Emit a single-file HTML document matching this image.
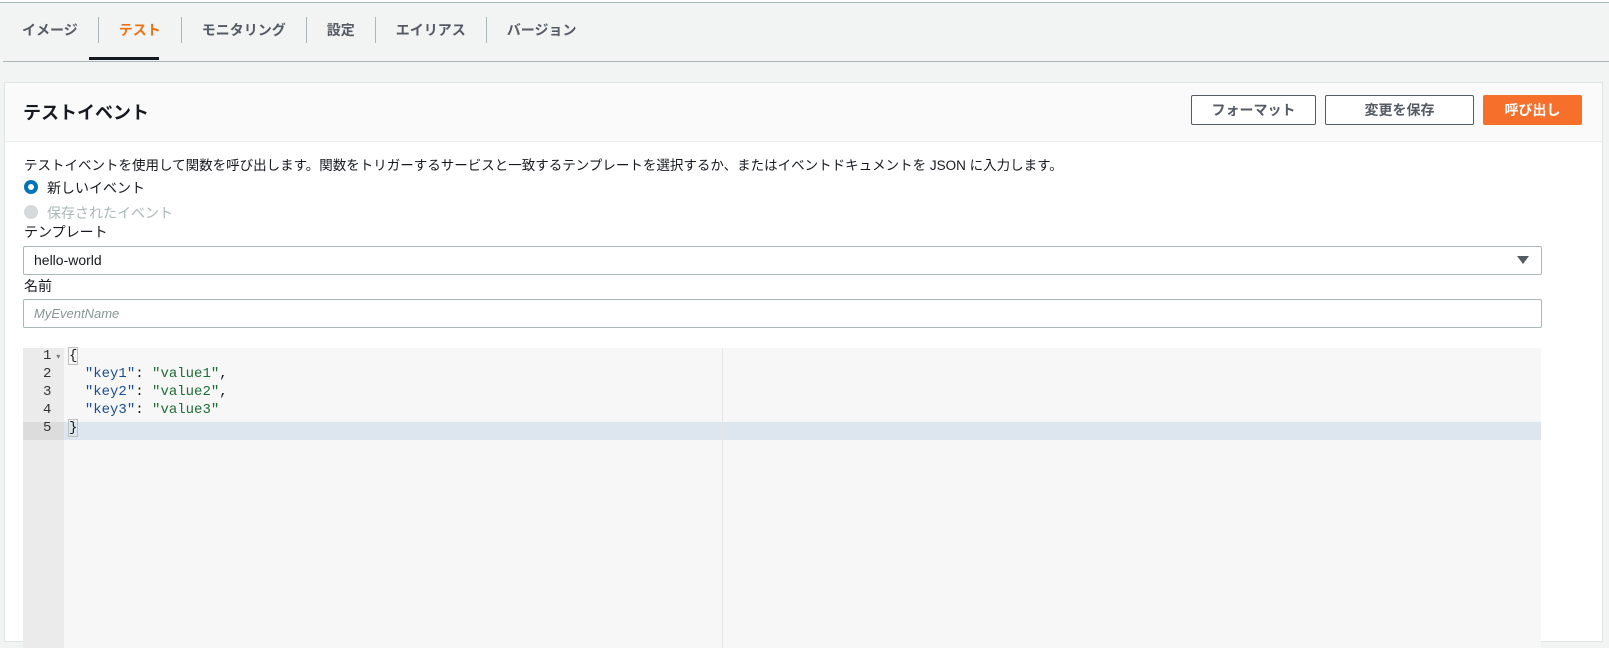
<!DOCTYPE html>
<html><head><meta charset="utf-8"><style>
*{box-sizing:border-box;margin:0;padding:0}
body{width:1609px;height:636px;overflow:hidden;background:#f2f3f3;font-family:"Liberation Sans","Noto Sans CJK JP",sans-serif;color:#16191f;position:relative}
.topline{position:absolute;left:0;top:0;width:1609px;height:3px;border-bottom:1px solid #aab7b8;background:#fff}
.tabs{position:absolute;left:8px;top:17px;height:44px;display:flex}
.tab{font-size:14px;font-weight:bold;color:#545b64;padding:0 20px;height:26px;line-height:26px;margin-top:0;border-left:1px solid #aab7b8;position:relative}
.tab:first-child{border-left:none;padding-left:14px}
.tab.active{color:#ec7211}
.tabline{position:absolute;left:3px;top:61px;width:1606px;height:1px;background:#aab7b8}
.ul{position:absolute;left:89px;top:57px;width:70px;height:3px;background:#16191f}
.panel{position:absolute;left:4px;top:82px;width:1599px;height:560px;background:#fff;border:1px solid #e1e4e4}
.hdr{height:59px;background:#fafafa;border-bottom:1px solid #eaeded;position:relative}
.hdr h2{position:absolute;left:18px;top:16px;font-size:18px;font-weight:bold}
.btn{position:absolute;top:12px;height:30px;border:1px solid #545b64;border-radius:2px;background:#fff;font-size:14px;font-weight:bold;color:#545b64;text-align:center;line-height:28px}
.txt{position:absolute;font-size:14px}
.radio{position:absolute;width:14px;height:14px;border-radius:50%}
.input{position:absolute;left:23px;width:1519px;height:29px;border:1px solid #aab7b8;border-radius:2px;font-size:14px;line-height:27px;padding-left:10px}
.ed{position:absolute;left:23px;top:348px;width:1518px;height:300px;background:#f7f7f7;font-family:"Liberation Mono",monospace;font-size:14px}
.gut{position:absolute;left:0;top:0;width:41px;height:300px;background:#ebebeb}
.ln{position:absolute;height:18px;line-height:18px}
</style></head><body>
<div class="topline"></div>
<div class="tabs">
<div class="tab">イメージ</div><div class="tab active">テスト</div><div class="tab">モニタリング</div><div class="tab">設定</div><div class="tab">エイリアス</div><div class="tab">バージョン</div>
</div>
<div class="tabline"></div><div class="ul"></div>
<div class="panel"><div class="hdr"><h2>テストイベント</h2>
<div class="btn" style="left:1186px;width:125px">フォーマット</div>
<div class="btn" style="left:1320px;width:149px">変更を保存</div>
<div class="btn" style="left:1478px;width:99px;background:#f7702b;border-color:#f7702b;color:#fff">呼び出し</div>
</div></div>
<div class="txt" style="left:24px;top:154px;font-size:13.5px">テストイベントを使用して関数を呼び出します。関数をトリガーするサービスと一致するテンプレートを選択するか、またはイベントドキュメントを JSON に入力します。</div>
<div class="radio" style="left:24px;top:180px;border:4px solid #0073bb;background:#fff"></div>
<div class="txt" style="left:47px;top:178px">新しいイベント</div>
<div class="radio" style="left:24px;top:205px;background:#d5dbdb"></div>
<div class="txt" style="left:47px;top:203px;color:#aab7b8">保存されたイベント</div>
<div class="txt" style="left:24px;top:222px">テンプレート</div>
<div class="input" style="top:246px">hello-world<span style="position:absolute;right:12px;top:9px;width:0;height:0;border-left:6px solid transparent;border-right:6px solid transparent;border-top:8px solid #545b64"></span></div>
<div class="txt" style="left:24px;top:276px">名前</div>
<div class="input" style="top:299px;color:#879596;font-style:italic;font-size:13px">MyEventName</div>
<div class="ed">
<div style="position:absolute;left:0;top:74px;width:1518px;height:18px;background:#dde6ee"></div>
<div class="gut"></div>
<div style="position:absolute;left:0;top:74px;width:41px;height:18px;background:#dcdcdc"></div>
<div style="position:absolute;left:699px;top:0;width:1px;height:300px;background:#e6e6e6"></div>
<div class="ln" style="left:20px;top:-1px;color:#333">1<span style="font-size:8px;color:#777"> ▾</span></div>
<div class="ln" style="left:20px;top:17px;color:#333">2</div>
<div class="ln" style="left:20px;top:35px;color:#333">3</div>
<div class="ln" style="left:20px;top:53px;color:#333">4</div>
<div class="ln" style="left:20px;top:71px;color:#333">5</div>
<div class="ln" style="left:45px;top:-1px;white-space:pre"><span style="border:1px solid #bfbfbf">{</span></div>
<div class="ln" style="left:45px;top:17px;white-space:pre">  <span style="color:#1a4d8f">"key1"</span>: <span style="color:#1b6d35">"value1"</span>,</div>
<div class="ln" style="left:45px;top:35px;white-space:pre">  <span style="color:#1a4d8f">"key2"</span>: <span style="color:#1b6d35">"value2"</span>,</div>
<div class="ln" style="left:45px;top:53px;white-space:pre">  <span style="color:#1a4d8f">"key3"</span>: <span style="color:#1b6d35">"value3"</span></div>
<div class="ln" style="left:45px;top:71px;white-space:pre"><span style="border:1px solid #bfbfbf">}</span></div>
</div>
</body></html>
